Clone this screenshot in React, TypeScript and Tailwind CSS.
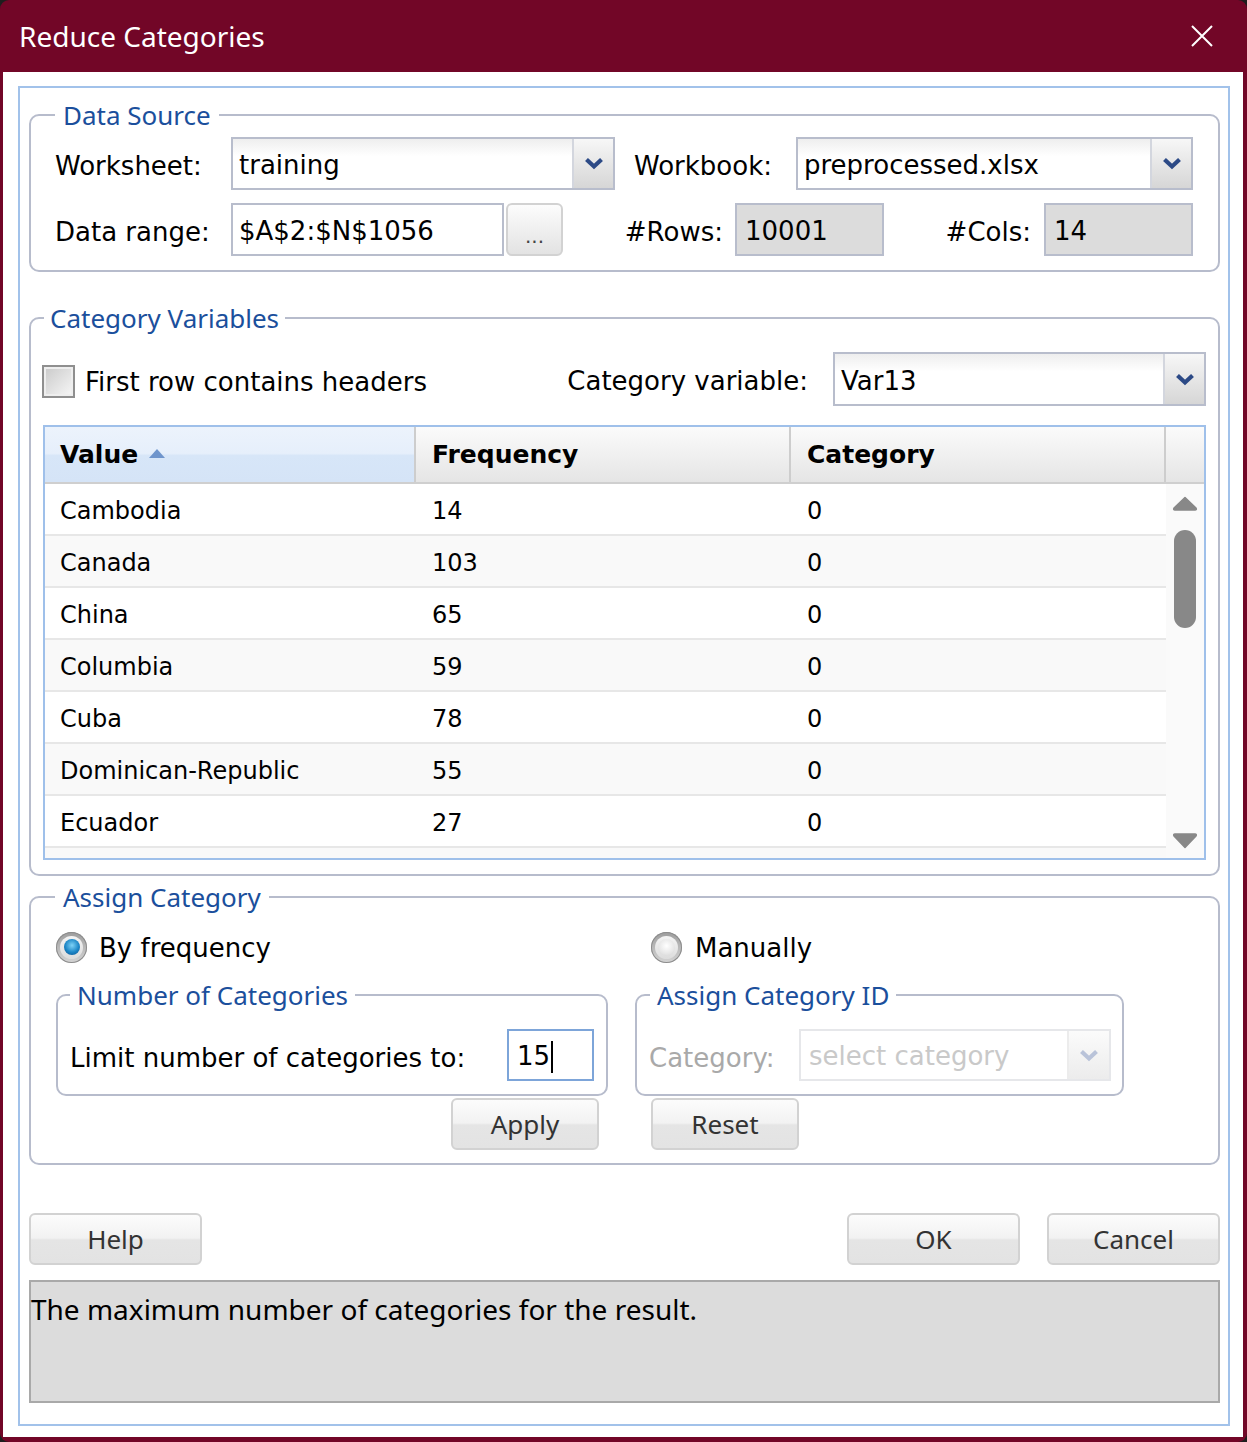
import React from 'react';

const rows = [
  { value: 'Cambodia', freq: '14', cat: '0' },
  { value: 'Canada', freq: '103', cat: '0' },
  { value: 'China', freq: '65', cat: '0' },
  { value: 'Columbia', freq: '59', cat: '0' },
  { value: 'Cuba', freq: '78', cat: '0' },
  { value: 'Dominican-Republic', freq: '55', cat: '0' },
  { value: 'Ecuador', freq: '27', cat: '0' },
  { value: '', freq: '', cat: '' },
];

function Chevron({ color = '#2c4a86' }: { color?: string }) {
  return (
    <svg width="20" height="13" viewBox="0 0 20 13">
      <path d="M2.5 2.5 L10 9.5 L17.5 2.5" fill="none" stroke={color} strokeWidth="4.2" />
    </svg>
  );
}

function Combo({ value, className }: { value: string; className: string }) {
  return (
    <div className={`flex border-2 border-[#b8bdcc] bg-[linear-gradient(to_bottom,#eeeeee,#ffffff_35%)] ${className}`}>
      <div className="flex flex-1 items-center pl-[6px] pt-[4px]">{value}</div>
      <div className="flex w-[41px] items-center justify-center border-l-2 border-[#d3d6de] bg-[linear-gradient(to_bottom,#f7f7f7,#d6d6d6)]">
        <Chevron />
      </div>
    </div>
  );
}

function Button({ label, className }: { label: string; className: string }) {
  return (
    <button
      className={`flex h-[52px] items-center justify-center rounded-[6px] border-2 border-[#d2d2d2] bg-[linear-gradient(to_bottom,#fcfcfc_0%,#f2f2f2_48%,#e5e5e5_52%,#e3e3e3_100%)] font-['Noto_Sans',sans-serif] text-[26px] text-[#333] ${className}`}
    >
      {label}
    </button>
  );
}

function Radio({ checked }: { checked: boolean }) {
  return (
    <div className="flex h-[31px] w-[31px] items-center justify-center rounded-full bg-[linear-gradient(to_bottom,#9d9d9d,#d4d4d4)] shadow-[inset_0_0_0_1px_#8c8c8c]">
      <div className="flex h-[23px] w-[23px] items-center justify-center rounded-full bg-[linear-gradient(to_bottom,#f4f4f4,#dcdcdc)]">
        {checked ? (
          <div className="h-[16px] w-[16px] rounded-full bg-[radial-gradient(circle_at_50%_40%,#7fd3f7,#1c86c6_55%,#0b4f8c)]" />
        ) : (
          <div className="h-[17px] w-[17px] rounded-full bg-[radial-gradient(circle_at_50%_40%,#ffffff,#e6e6e6_60%,#cfcfcf)]" />
        )}
      </div>
    </div>
  );
}

const legend = "font-['Noto_Sans',sans-serif] text-[26px] leading-[30px] text-[#1b4f9c]";

export default function App() {
  return (
    <div className="h-[1442px] w-[1247px] bg-[#1e1e1e] font-['DejaVu_Sans',sans-serif] text-[26px] text-black">
      <div className="flex h-full flex-col rounded-[9px] bg-[#720627]">
        {/* title bar */}
        <div className="flex h-[72px] items-center justify-between pl-[19px] pr-[34px]">
          <span className="font-['Noto_Sans',sans-serif] text-[28px] text-white">Reduce Categories</span>
          <svg width="22" height="22" viewBox="0 0 22 22">
            <path d="M1 1 L21 21 M21 1 L1 21" stroke="#ffffff" strokeWidth="2" />
          </svg>
        </div>

        <div className="ml-[3px] mr-[4px] h-[1365px] bg-white pt-[14px]">
          <div className="ml-[15px] flex h-[1340px] w-[1212px] flex-col border-2 border-[#a2c2ea] pl-[9px] pr-[8px] pt-[12px]">
            {/* Data Source */}
            <fieldset className="rounded-[10px] border-2 border-[#b7bccc]">
              <legend className={`ml-[24px] px-[8px] ${legend}`}>Data Source</legend>
              <div className="flex flex-col gap-[13px] pb-[14px] pl-[24px] pt-[7px]">
                <div className="flex h-[53px] items-center">
                  <span className="w-[176px] pt-[5px]">Worksheet:</span>
                  <Combo value="training" className="h-[53px] w-[384px]" />
                  <span className="ml-[19px] w-[162px] pt-[5px]">Workbook:</span>
                  <Combo value="preprocessed.xlsx" className="h-[53px] w-[397px]" />
                </div>
                <div className="flex h-[53px] items-center">
                  <span className="w-[176px] pt-[5px]">Data range:</span>
                  <div className="flex h-[53px] w-[273px] items-center border-2 border-[#b8bdcc] pl-[6px] pt-[4px]">$A$2:$N$1056</div>
                  <div className="ml-[2px] flex h-[53px] w-[57px] items-end justify-center rounded-[6px] border-2 border-[#d2d2d2] bg-[linear-gradient(to_bottom,#fcfcfc,#e3e3e3)] pb-[8px] text-[20px] leading-none text-[#444]">
                    ...
                  </div>
                  <span className="w-[160px] pt-[5px] text-right">#Rows:</span>
                  <div className="ml-[12px] flex h-[53px] w-[149px] items-center border-2 border-[#b8bdcc] bg-[#dcdcdc] pl-[8px] pt-[4px]">10001</div>
                  <span className="w-[147px] pt-[5px] text-right">#Cols:</span>
                  <div className="ml-[13px] flex h-[53px] w-[149px] items-center border-2 border-[#b8bdcc] bg-[#dcdcdc] pl-[8px] pt-[4px]">14</div>
                </div>
              </div>
            </fieldset>

            {/* Category Variables */}
            <fieldset className="mt-[31px] rounded-[10px] border-2 border-[#b7bccc]">
              <legend className={`ml-[13px] px-[6px] ${legend}`}>Category Variables</legend>
              <div className="px-[12px] pb-[14px] pt-[19px]">
                <div className="flex h-[54px] items-center justify-between">
                  <div className="-ml-[1px] flex items-center">
                    <div className="mt-[4px] h-[33px] w-[33px] border-2 border-[#8f8f8f] bg-[linear-gradient(135deg,#c9c9c9,#f7f7f7)] shadow-[inset_0_0_0_2px_#eeeeee]" />
                    <span className="ml-[10px] pt-[6px]">First row contains headers</span>
                  </div>
                  <div className="flex items-center">
                    <span className="pt-[5px]">Category variable:</span>
                    <Combo value="Var13" className="ml-[25px] h-[54px] w-[373px]" />
                  </div>
                </div>

                {/* table */}
                <div className="mt-[19px] flex h-[435px] w-[1163px] flex-col border-2 border-[#9fc0ea]">
                  <div className="flex h-[57px] border-b-2 border-[#cfcfcf] text-[25px] font-bold">
                    <div className="flex w-[371px] items-center gap-[10px] border-r-2 border-[#cdcdcd] bg-[linear-gradient(to_bottom,#ecf3fc_0%,#e6effb_48%,#d7e6f8_52%,#d5e4f7_100%)] pl-[15px]">
                      <span>Value</span>
                      <svg width="18" height="10" viewBox="0 0 18 10" className="mb-[4px]">
                        <path d="M1 10 L9 1 L17 10 Z" fill="#6f95cc" />
                      </svg>
                    </div>
                    <div className="flex w-[375px] items-center border-r-2 border-[#cdcdcd] bg-[linear-gradient(to_bottom,#fbfbfb,#e5e5e5)] pl-[16px]">
                      Frequency
                    </div>
                    <div className="flex w-[375px] items-center border-r-2 border-[#cdcdcd] bg-[linear-gradient(to_bottom,#fbfbfb,#e5e5e5)] pl-[16px]">
                      Category
                    </div>
                    <div className="flex-1 bg-[linear-gradient(to_bottom,#fbfbfb,#e5e5e5)]" />
                  </div>
                  <div className="flex flex-1 overflow-hidden">
                    <div className="w-[1121px] text-[24px]">
                      {rows.map((r, i) => (
                        <div
                          key={i}
                          className={`flex h-[52px] items-center border-b-2 border-[#e7e7e7] pt-[4px] ${i % 2 === 1 ? 'bg-[#f9f9f9]' : 'bg-white'}`}
                        >
                          <div className="w-[371px] pl-[15px]">{r.value}</div>
                          <div className="w-[375px] pl-[16px]">{r.freq}</div>
                          <div className="w-[375px] pl-[16px]">{r.cat}</div>
                        </div>
                      ))}
                    </div>
                    <div className="flex flex-1 flex-col items-center bg-[#fafafa] pb-[9px] pt-[12px]">
                      <svg width="26" height="15" viewBox="0 0 26 15">
                        <path d="M13 1.5 L24 12 Q25 14 23 14 L3 14 Q1 14 2 12 Z" fill="#888888" stroke="#888888" strokeLinejoin="round" strokeWidth="1.5" />
                      </svg>
                      <div className="mt-[19px] h-[98px] w-[22px] rounded-full bg-[#888888]" />
                      <div className="flex-1" />
                      <svg width="26" height="17" viewBox="0 0 26 17">
                        <path d="M13 15.5 L24 4 Q25 2 23 2 L3 2 Q1 2 2 4 Z" fill="#888888" stroke="#888888" strokeLinejoin="round" strokeWidth="1.5" />
                      </svg>
                    </div>
                  </div>
                </div>
              </div>
            </fieldset>

            {/* Assign Category */}
            <fieldset className="mt-[6px] rounded-[10px] border-2 border-[#b7bccc]">
              <legend className={`ml-[24px] px-[8px] ${legend}`}>Assign Category</legend>
              <div className="flex gap-[27px] pb-[13px] pl-[25px] pt-[20px]">
                <div className="flex w-[552px] flex-col">
                  <div className="flex h-[30px] items-center">
                    <Radio checked />
                    <span className="ml-[12px] pt-[3px]">By frequency</span>
                  </div>
                  <fieldset className="mt-[18px] rounded-[10px] border-2 border-[#b7bccc]">
                    <legend className={`ml-[12px] px-[7px] ${legend}`}>Number of Categories</legend>
                    <div className="flex items-center pb-[13px] pl-[12px] pr-[12px] pt-[19px]">
                      <span className="pt-[6px]">Limit number of categories to:</span>
                      <div className="ml-auto flex h-[52px] w-[87px] items-center border-2 border-[#7da5d9] pl-[8px] pt-[3px]">
                        15
                        <span className="ml-[1px] h-[32px] w-[2px] bg-black" />
                      </div>
                    </div>
                  </fieldset>
                  <Button label="Apply" className="ml-auto mr-[9px] mt-[2px] w-[148px]" />
                </div>

                <div className="flex w-[489px] flex-col">
                  <div className="flex h-[30px] items-center pl-[16px]">
                    <Radio checked={false} />
                    <span className="ml-[13px] pt-[3px]">Manually</span>
                  </div>
                  <fieldset className="mt-[18px] rounded-[10px] border-2 border-[#b7bccc]">
                    <legend className={`ml-[13px] px-[7px] ${legend}`}>Assign Category ID</legend>
                    <div className="flex items-center pb-[13px] pl-[12px] pr-[11px] pt-[19px]">
                      <span className="pt-[6px] text-[#a9a9a9]">Category:</span>
                      <div className="ml-auto flex h-[52px] w-[312px] border-2 border-[#e6e7ea]">
                        <div className="flex flex-1 items-center pl-[8px] pt-[3px] text-[#c9c9c9]">select category</div>
                        <div className="flex w-[42px] items-center justify-center border-l-2 border-[#ececec] bg-[linear-gradient(to_bottom,#fbfbfb,#ececec)]">
                          <Chevron color="#b9c3d9" />
                        </div>
                      </div>
                    </div>
                  </fieldset>
                  <Button label="Reset" className="ml-[16px] mt-[2px] w-[148px]" />
                </div>
              </div>
            </fieldset>

            {/* dialog buttons */}
            <div className="mt-[48px] flex">
              <Button label="Help" className="w-[173px]" />
              <Button label="OK" className="ml-auto w-[173px]" />
              <Button label="Cancel" className="ml-[27px] w-[173px]" />
            </div>

            <div className="mt-[15px] h-[123px] border-2 border-[#a9a9a9] bg-[#dcdcdc] pt-[6px] font-['Noto_Sans',sans-serif] text-[28px]">
              The maximum number of categories for the result.
            </div>
          </div>
        </div>
      </div>
    </div>
  );
}
